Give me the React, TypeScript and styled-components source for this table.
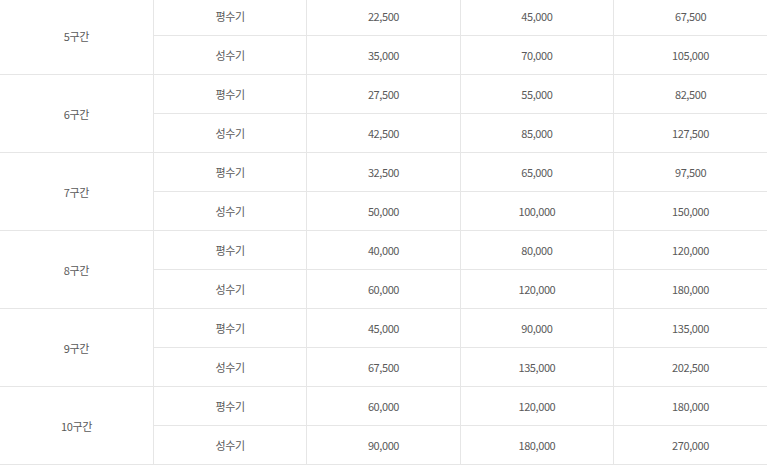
import * as React from 'react'
import styled, { createGlobalStyle } from 'styled-components'

const GlobalStyle = createGlobalStyle`
  body {
    margin: 0;
    background: #fff;
    overflow: hidden;
  }
`

const Viewport = styled.div`
  width: 773px;
  height: 468px;
  overflow: hidden;
`

const Table = styled.table`
  width: 767px;
  margin-top: -3px;
  border-collapse: collapse;
  table-layout: fixed;
  font-family: 'Noto Sans CJK KR', 'Noto Sans', sans-serif;
  font-size: 11px;
  letter-spacing: -0.4px;
  color: #5a5a5a;
`

const Cell = styled.td<{ $first?: boolean }>`
  height: 38px;
  padding: 0;
  text-align: center;
  vertical-align: middle;
  border-bottom: 1px solid #e6e6e6;
  border-left: ${(p) => (p.$first ? 'none' : '1px solid #e6e6e6')};
`

type Tier = { name: string; off: string[]; peak: string[] }

const tiers: Tier[] = [
  { name: '5구간', off: ['22,500', '45,000', '67,500'], peak: ['35,000', '70,000', '105,000'] },
  { name: '6구간', off: ['27,500', '55,000', '82,500'], peak: ['42,500', '85,000', '127,500'] },
  { name: '7구간', off: ['32,500', '65,000', '97,500'], peak: ['50,000', '100,000', '150,000'] },
  { name: '8구간', off: ['40,000', '80,000', '120,000'], peak: ['60,000', '120,000', '180,000'] },
  { name: '9구간', off: ['45,000', '90,000', '135,000'], peak: ['67,500', '135,000', '202,500'] },
  { name: '10구간', off: ['60,000', '120,000', '180,000'], peak: ['90,000', '180,000', '270,000'] },
]

export default function App() {
  return (
    <>
      <GlobalStyle />
      <Viewport>
        <Table>
          <tbody>
            {tiers.map((t) => (
              <React.Fragment key={t.name}>
                <tr>
                  <Cell $first rowSpan={2}>{t.name}</Cell>
                  <Cell>평수기</Cell>
                  {t.off.map((v, i) => <Cell key={i}>{v}</Cell>)}
                </tr>
                <tr>
                  <Cell>성수기</Cell>
                  {t.peak.map((v, i) => <Cell key={i}>{v}</Cell>)}
                </tr>
              </React.Fragment>
            ))}
          </tbody>
        </Table>
      </Viewport>
    </>
  )
}
